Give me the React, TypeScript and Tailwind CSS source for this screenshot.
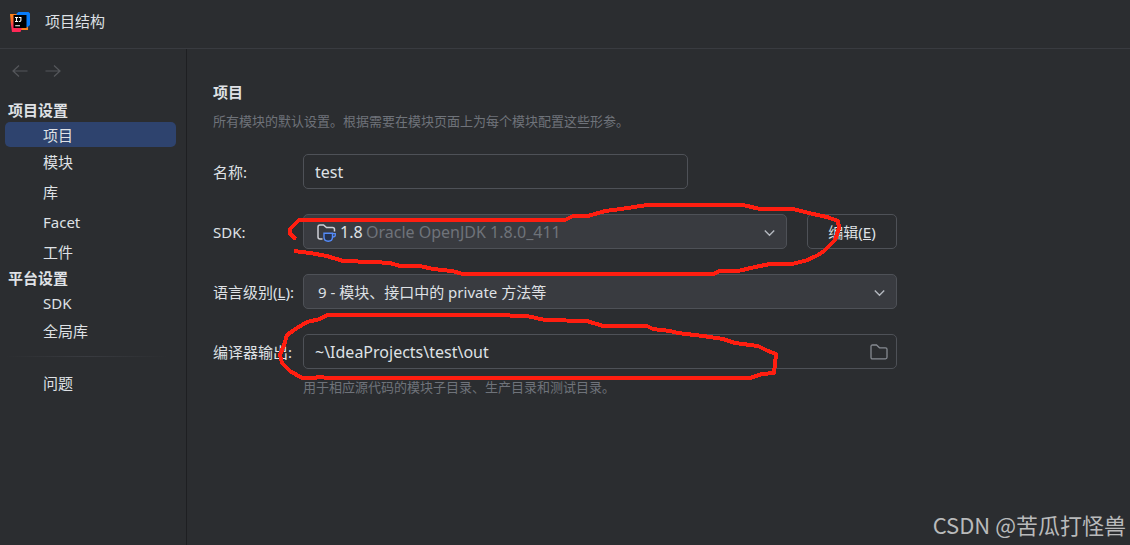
import React from 'react';

const font = "font-['Noto_Sans','Noto_Sans_CJK_SC',sans-serif]";

const field =
  'h-[35px] w-full appearance-none rounded-[5px] border border-[#4e5157] px-[11px] text-[#dfe1e5] outline-none';

function AppLogo() {
  return (
    <svg width="20" height="20" viewBox="0 0 20 20" aria-hidden="true">
      <defs>
        <linearGradient id="warm" x1="0" y1="0" x2="0.4" y2="1">
          <stop offset="0" stopColor="#ff8a12" />
          <stop offset="0.35" stopColor="#fc6a2a" />
          <stop offset="0.65" stopColor="#fe2f57" />
          <stop offset="1" stopColor="#fe2857" />
        </linearGradient>
      </defs>
      <path d="M8 14H18V18H9Z" fill="#fc801d" />
      <path d="M0 2H8V15.5H12L10.5 20H2L1 13Z" fill="url(#warm)" />
      <path d="M6.5 1.5 8.5 0H18.5L20 1.5V13L17 15.5 7 4Z" fill="#087cfa" />
      <rect x="3.5" y="3" width="13" height="13" fill="#000" />
      <path
        d="M5 5.5H8M6.5 5.5V9.5M5 9.5H8M8.8 5.5H10.9V8.3Q10.9 9.6 8.8 9.4M5.2 13.7H10"
        stroke="#fff"
        strokeWidth="1.1"
        fill="none"
      />
    </svg>
  );
}

function Arrow({ flip = false }: { flip?: boolean }) {
  return (
    <svg width="16" height="14" viewBox="0 0 16 14" fill="none" stroke="#55575b" strokeWidth="1.2" aria-hidden="true">
      {flip ? <path d="M0.5 7H15M9 1.5 15 7 9 12.5" /> : <path d="M15.5 7H1M7 1.5 1 7 7 12.5" />}
    </svg>
  );
}

function Chevron() {
  return (
    <svg
      className="pointer-events-none absolute top-[15px] right-3"
      width="11"
      height="8"
      viewBox="0 0 11 8"
      fill="none"
      stroke="#b4b8bf"
      strokeWidth="1.4"
      aria-hidden="true"
    >
      <path d="M0.8 1.5 5.5 6.2 10.2 1.5" />
    </svg>
  );
}

function SdkIcon() {
  return (
    <svg width="20" height="19" viewBox="0 0 20 19" fill="none" aria-hidden="true">
      <path
        d="M5.5 15H3Q1 15 1 13V3Q1 1 3 1H6.5L9.5 3.6H15.5Q17.5 3.6 17.5 5.6V7.5"
        stroke="#ced0d6"
        strokeWidth="1.5"
      />
      <path d="M7 9.3H15.5V13Q15.5 17.2 11.2 17.2 7 17.2 7 13Z" fill="#25324d" stroke="#548af7" strokeWidth="1.4" />
      <path d="M15.5 9.7H18.3V11.3Q18.3 13 15.5 13" stroke="#548af7" strokeWidth="1.3" />
    </svg>
  );
}

function NavItem({ label, size = 'h-[30px]', active = false }: { label: string; size?: string; active?: boolean }) {
  return (
    <li>
      <a
        href="#"
        aria-current={active ? 'page' : undefined}
        className={`flex items-center rounded-[5px] pl-[38px] ${size} ${active ? 'bg-[#2e436e]' : ''}`}
      >
        {label}
      </a>
    </li>
  );
}

function Row({ id, label, children }: { id: string; label: React.ReactNode; children: React.ReactNode }) {
  return (
    <div className="flex items-center">
      <label htmlFor={id} className="w-[90px] shrink-0 whitespace-nowrap">
        {label}
      </label>
      {children}
    </div>
  );
}

function Annotations() {
  return (
    <svg
      className="pointer-events-none absolute top-0 left-0"
      width="900"
      height="400"
      viewBox="0 0 900 400"
      fill="none"
      stroke="#ff1e10"
      strokeWidth="4"
      strokeLinejoin="round"
      shapeRendering="crispEdges"
      aria-hidden="true"
    >
      <path d="M296 239 290 234 290 229 299 220H565L573 216 588 216 605 211 621 209 647 205H743L760 209 793 209 813 214 827 217 838 221 839 228 835 240 828 247 824 251 818 255 808 260 792 264 770 264 755 267 738 271 720 271 713 274H463L452 271 433 269 420 266 400 266 390 263 373 262 343 261 327 256 310 253 294 251" />
      <path d="M327 315 320 319 307 322 297 328 287 335 284 345 280 355 282 363 290 371 302 378 313 378 320 377 328 378H750L762 374 774 373 776 354 768 351 758 346 735 343 723 339 703 336 678 333 670 331 653 329 647 326H603L587 321 545 320 527 316 492 315Z" />
    </svg>
  );
}

export default function App() {
  return (
    <div className={`relative flex min-h-screen flex-col bg-[#2b2d30] text-[15px] leading-5 text-[#dfe1e5] ${font}`}>
      <header className="flex h-[49px] items-center gap-[15px] border-b border-[#393b40] px-2.5 pb-1">
        <AppLogo />
        <h1 className="pb-0.5">项目结构</h1>
      </header>

      <div className="flex flex-1">
        <nav className="w-[187px] shrink-0 border-r border-[#1e1f22] pr-2.5 pl-[5px]" aria-label="项目结构">
          <div className="flex h-[51px] items-start gap-[17px] pt-[15px] pl-[7px]">
            <button type="button" aria-label="后退" disabled>
              <Arrow />
            </button>
            <button type="button" aria-label="前进" disabled>
              <Arrow flip />
            </button>
          </div>
          <h2 className="h-[22px] pl-[3px] font-bold leading-5">项目设置</h2>
          <ul>
            <NavItem label="项目" size="h-[25px]" active />
            <NavItem label="模块" />
            <NavItem label="库" />
            <NavItem label="Facet" />
            <NavItem label="工件" />
          </ul>
          <h2 className="h-[22px] pl-[3px] font-bold leading-[22px]">平台设置</h2>
          <ul>
            <NavItem label="SDK" size="h-7" />
            <NavItem label="全局库" size="h-7" />
          </ul>
          <hr className="my-[11px] mr-2 h-px border-0 bg-linear-to-r from-[#2b2d30] via-[#393b40] to-[#2b2d30]" />
          <ul>
            <NavItem label="问题" />
          </ul>
        </nav>

        <main className="flex-1 px-[26px] pt-[33px]">
          <h2 className="font-bold">项目</h2>
          <p className="mt-[9px] text-[13px] text-[#6f737a]">所有模块的默认设置。根据需要在模块页面上为每个模块配置这些形参。</p>

          <form className="mt-[23px] flex max-w-[684px] flex-col gap-[25px]">
            <Row id="name" label="名称:">
              <input id="name" defaultValue="test" className={`${field} max-w-[385px] bg-[#2b2d30] text-base`} />
            </Row>

            <Row id="sdk" label="SDK:">
              <div className="relative mr-5 flex-1">
                <select id="sdk" className={`${field} bg-[#393b40] pl-9 text-base`}>
                  <option>1.8</option>
                </select>
                <span className="pointer-events-none absolute top-2.5 left-3.5">
                  <SdkIcon />
                </span>
                <span className="pointer-events-none absolute top-2 left-[63px] text-base leading-5 text-[#6f737a]">
                  Oracle OpenJDK 1.8.0_411
                </span>
                <Chevron />
              </div>
              <button type="button" className="h-[35px] w-[90px] rounded-[5px] border border-[#4e5157]">
                编辑(<u>E</u>)
              </button>
            </Row>

            <Row
              id="level"
              label={
                <>
                  语言级别(<u>L</u>):
                </>
              }
            >
              <div className="relative flex-1">
                <select id="level" className={`${field} bg-[#393b40] pl-[14px] text-[15px]`}>
                  <option>9 - 模块、接口中的 private 方法等</option>
                </select>
                <Chevron />
              </div>
            </Row>

            <Row id="output" label="编译器输出:">
              <div className="relative flex-1">
                <input
                  id="output"
                  defaultValue="~\IdeaProjects\test\out"
                  className={`${field} bg-[#2b2d30] text-base`}
                />
                <button type="button" aria-label="浏览" className="absolute top-2.5 right-[9px]">
                  <svg width="18" height="16" viewBox="0 0 18 16" fill="none" stroke="#868a91" strokeWidth="1.3" aria-hidden="true">
                    <path d="M1 2.5Q1 1 2.5 1H6.5L9.5 3.8H15.5Q17 3.8 17 5.3V13.3Q17 14.8 15.5 14.8H2.5Q1 14.8 1 13.3Z" />
                  </svg>
                </button>
              </div>
            </Row>
          </form>
          <p className="mt-2 pl-[90px] text-[13px] text-[#6f737a]">用于相应源代码的模块子目录、生产目录和测试目录。</p>
        </main>
      </div>

      <Annotations />
      <p className="absolute right-1 bottom-[7px] font-['Noto_Sans_CJK_SC',sans-serif] text-[22px] leading-7 text-[#b9babb]">
        CSDN @苦瓜打怪兽
      </p>
    </div>
  );
}
